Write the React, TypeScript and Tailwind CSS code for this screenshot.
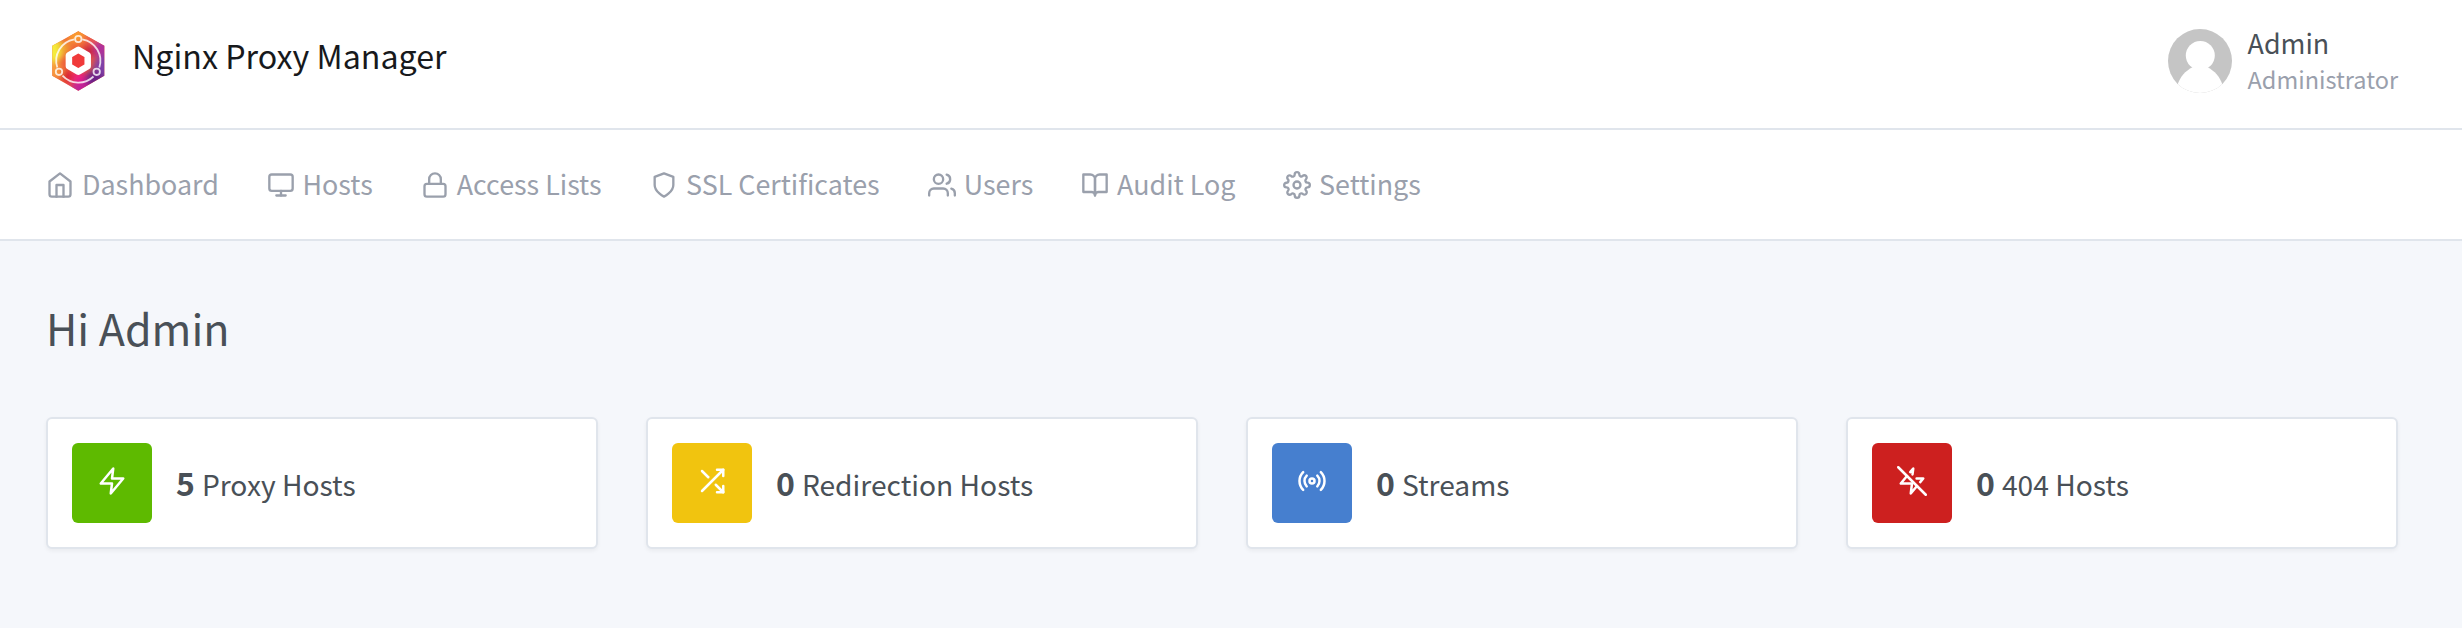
import React from "react";
import { FiHome, FiMonitor, FiLock, FiShield, FiUsers, FiBookOpen, FiSettings, FiZap, FiShuffle, FiRadio, FiZapOff } from "react-icons/fi";

const nav = [
  { icon: FiHome, label: "Dashboard", w: "w-[136.500px]" },
  { icon: FiMonitor, label: "Hosts", w: "w-[70.200px]" },
  { icon: FiLock, label: "Access Lists", w: "w-[145.400px]" },
  { icon: FiShield, label: "SSL Certificates", w: "w-[193.600px]" },
  { icon: FiUsers, label: "Users", w: "w-[69.400px]" },
  { icon: FiBookOpen, label: "Audit Log", w: "w-[118px]" },
  { icon: FiSettings, label: "Settings", w: "w-[102px]" },
];

const stats = [
  { icon: FiZap, color: "bg-[#5eba00]", count: 5, label: "Proxy Hosts" },
  { icon: FiShuffle, color: "bg-[#f1c40f]", count: 0, label: "Redirection Hosts" },
  { icon: FiRadio, color: "bg-[#467fcf]", count: 0, label: "Streams" },
  { icon: FiZapOff, color: "bg-[#cd201f]", count: 0, label: "404 Hosts" },
];

function Logo() {
  return (
    <svg viewBox="0 0 64 64" className="size-16">
      <defs>
        <clipPath id="hex"><path d="M32.300 3.200 58.300 17.800v30L32.300 62.700 6.300 47.800v-30z" /></clipPath>
        <filter id="soft" x="-50%" y="-50%" width="200%" height="200%"><feGaussianBlur stdDeviation="3" /></filter>
      </defs>
      <g clipPath="url(#hex)">
        <rect width="64" height="64" fill="#ee5a3a" />
        <g filter="url(#soft)">
          <circle cx="30" cy="6" r="10" fill="#f9992f" />
          <circle cx="5" cy="22" r="13" fill="#f4ee3a" />
          <circle cx="19" cy="20" r="6" fill="#f0a030" />
          <circle cx="8" cy="43" r="9" fill="#f79a3c" />
          <circle cx="46" cy="12" r="7" fill="#ea5a50" />
          <circle cx="60" cy="22" r="12" fill="#b0309a" />
          <circle cx="43" cy="23" r="6" fill="#c8203c" />
          <circle cx="60" cy="40" r="13" fill="#8040a8" />
          <circle cx="48" cy="52" r="10" fill="#6d2488" />
          <circle cx="34" cy="60" r="9" fill="#c0209a" />
          <circle cx="33" cy="49" r="6" fill="#ee1b85" />
          <circle cx="21" cy="48" r="6" fill="#d81f30" />
        </g>
      </g>
      <g fill="none" stroke="#fff" strokeOpacity="0.8" strokeWidth="1.800">
        <path d="M28.300 11.300A21.700 21.700 0 0 0 11.300 39.500M36.300 11.300A21.700 21.700 0 0 1 53.300 39.500M16.500 47.700A21.700 21.700 0 0 0 47.500 48.500" />
        <circle cx="32.300" cy="11" r="3.200" />
        <circle cx="13" cy="43.800" r="3.200" />
        <circle cx="50.700" cy="43.800" r="3.200" />
      </g>
      <path d="M32.300 21.700 41.700 27.200v11l-9.400 5.500L22.900 38.200v-11z" fill="#f03a3a" stroke="#fff" strokeWidth="6.500" strokeLinejoin="round" />
    </svg>
  );
}

function Avatar() {
  return (
    <svg viewBox="0 0 64 64" className="mt-px size-16">
      <defs>
        <clipPath id="disc"><circle cx="32" cy="32" r="32" /></clipPath>
      </defs>
      <g clipPath="url(#disc)">
        <rect width="64" height="64" fill="#c5c5c5" />
        <path d="M25 38h14C47 42 52 48 54.500 56L48 64H16l-6.500-8C12 48 17 42 25 38z" fill="#fff" />
        <circle cx="32.300" cy="26.500" r="14.500" fill="#fff" />
      </g>
    </svg>
  );
}

export default function App() {
  return (
    <div className="h-[628px] overflow-hidden bg-[#f5f7fb] font-['Noto_Sans_CJK_SC',sans-serif] text-[#495057]">
      <header className="flex h-[130px] items-start justify-between border-b-2 border-[#e0e5ec] bg-white pr-16 pl-[46px]">
        <div className="flex pt-7">
          <Logo />
          <span className="ml-[22px] text-[32.200px] leading-[54px] whitespace-nowrap text-[#17191c]">Nginx Proxy Manager</span>
        </div>
        <div className="flex pt-7">
          <Avatar />
          <div className="ml-4 flex flex-col whitespace-nowrap">
            <span className="text-[26.860px] leading-[30px]">Admin</span>
            <span className="mt-[5px] text-[23.500px] leading-8 text-[#9aa0ac]">Administrator</span>
          </div>
        </div>
      </header>
      <nav className="flex h-[111px] items-center gap-12 border-b-2 border-[#e0e5ec] bg-white pl-[46px] text-[26.860px] text-[#9aa0ac]">
        {nav.map(({ icon: Icon, label, w }) => (
          <a key={label} className="flex items-center gap-2 whitespace-nowrap">
            <Icon className="mt-px size-7 shrink-0" />
            <span className={w}>{label}</span>
          </a>
        ))}
      </nav>
      <main className="pr-16 pl-[46px]">
        <h1 className="pt-[60px] text-[43px] leading-[53px]">Hi Admin</h1>
        <div className="mt-[63px] grid grid-cols-4 gap-12">
          {stats.map(({ icon: Icon, color, count, label }) => (
            <section key={label} className="flex h-[132px] items-center rounded-md border-2 border-[#e0e5ec] bg-white px-6 shadow-[0_2px_4px_rgba(0,0,0,0.05)]">
              <div className={`flex size-20 items-center justify-center rounded-md text-white ${color}`}>
                <Icon className="mb-1 size-[30px]" />
              </div>
              <div className="ml-6 flex items-baseline gap-[7px] whitespace-nowrap">
                <b className="text-[32px] leading-10">{count}</b>
                <span className="text-[28.200px] leading-10">{label}</span>
              </div>
            </section>
          ))}
        </div>
      </main>
    </div>
  );
}
